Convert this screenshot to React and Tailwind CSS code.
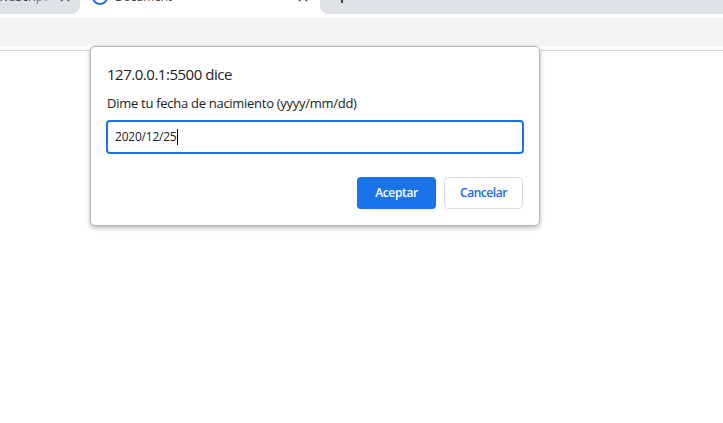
function TabClose() {
  return (
    <svg viewBox="0 0 10 10" className="size-[10px]" fill="none" stroke="#45494d" strokeWidth="1.5">
      <path d="M1 1l8 8M9 1L1 9" />
    </svg>
  );
}

function TabStrip() {
  return (
    <div className="flex h-[18px] items-start overflow-hidden bg-white text-[12px] leading-4 text-[#3c4043]">
      <div className="flex h-[14px] w-20 items-start rounded-br-[8px] bg-[#dee1e6]">
        <span className="-mt-[11px] -ml-[7px] w-[58px] overflow-hidden bg-linear-to-r from-[#3c4043] from-70% to-[#dee1e6] bg-clip-text whitespace-nowrap text-transparent">
          JavaScript
        </span>
        <span className="-mt-[8px] ml-[9px]"><TabClose /></span>
      </div>
      <div className="flex h-[14px] w-60 items-start">
        <span className="-mt-[11px] ml-3 size-4 shrink-0 rounded-full border-2 border-[#1a73e8]" />
        <span className="-mt-[11px] ml-[7px] w-[183px] tracking-[-0.2px]">Document</span>
        <span className="-mt-[8px]"><TabClose /></span>
      </div>
      <div className="h-[14px] flex-1 rounded-bl-[8px] bg-[#dee1e6]">
        <div className="ml-[21px] h-[3px] w-[2px] bg-[#3c4043]" />
      </div>
    </div>
  );
}

function PromptDialog() {
  return (
    <div
      role="dialog"
      className="absolute top-[46px] left-[90px] flex h-[180px] w-[450px] flex-col rounded-[5px] border border-[#b3b5b6] bg-white px-[15px] pt-[16px] text-[#202124] shadow-[0_2px_5px_rgba(0,0,0,0.28)]"
    >
      <h1 className="ml-px h-[22px] text-[15px] leading-[22px] font-normal tracking-[-0.48px] whitespace-nowrap">
        127.0.0.1:5500 dice
      </h1>
      <p className="mt-[9px] ml-px h-[18px] text-[13px] leading-[18px] tracking-[-0.28px] whitespace-nowrap">
        Dime tu fecha de nacimiento (yyyy/mm/dd)
      </p>
      <div className="mt-[8px] flex h-[34px] w-[418px] items-center rounded-[4px] border-2 border-[#1a73e8] pl-[7px] text-[12px]">
        <span className="tracking-[-0.22px]">2020/12/25</span>
        <span className="h-4 w-px bg-black" />
      </div>
      <div className="mt-[23px] flex justify-end gap-2 pr-px text-[12px] font-semibold">
        <button className="h-8 w-[79px] rounded-[4px] bg-[#1a73e8] tracking-[-0.35px] text-white">Aceptar</button>
        <button className="h-8 w-[79px] rounded-[4px] border border-[#dadce0] tracking-[-0.45px] text-[#1a66e8]">Cancelar</button>
      </div>
    </div>
  );
}

export default function App() {
  return (
    <div className="relative h-[423px] w-[723px] overflow-hidden bg-white font-['Open_Sans','Noto_Sans',sans-serif]">
      <TabStrip />
      <div className="h-[28px] bg-[#f1f3f4]" />
      <div className="h-[5px] border-b border-[#d6d7d9]" />
      <PromptDialog />
    </div>
  );
}
